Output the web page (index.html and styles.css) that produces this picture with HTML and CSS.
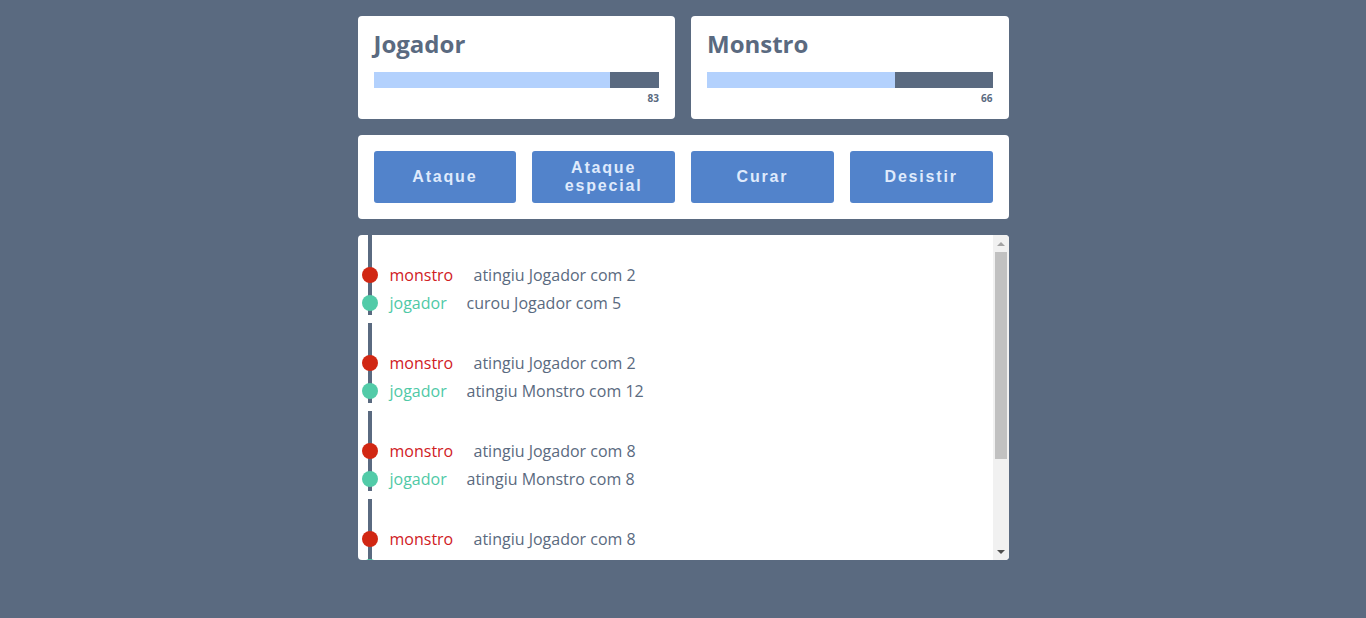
FILE: index.html
```html
<!DOCTYPE html>
<html lang="pt">
<head>
<meta charset="utf-8">
<title>Monstro</title>
<link rel="stylesheet" href="styles.css">
</head>
<body>
<main class="app">
  <section class="players">
    <div class="card player">
      <h1 class="player-name">Jogador</h1>
      <div class="life-bar"><div class="life-fill" style="width: 83%"></div></div>
      <div class="life-value">83</div>
    </div>
    <div class="card player">
      <h1 class="player-name">Monstro</h1>
      <div class="life-bar"><div class="life-fill" style="width: 66%"></div></div>
      <div class="life-value">66</div>
    </div>
  </section>
  <section class="card actions">
    <button class="btn">Ataque</button>
    <button class="btn">Ataque especial</button>
    <button class="btn">Curar</button>
    <button class="btn">Desistir</button>
  </section>
  <section class="card log">
    <div class="log-content">
      <ul class="turn">
        <li class="entry monster"><span class="who">monstro</span><span class="what">atingiu Jogador com 2</span></li>
        <li class="entry player-entry"><span class="who">jogador</span><span class="what">curou Jogador com 5</span></li>
      </ul>
      <ul class="turn">
        <li class="entry monster"><span class="who">monstro</span><span class="what">atingiu Jogador com 2</span></li>
        <li class="entry player-entry"><span class="who">jogador</span><span class="what">atingiu Monstro com 12</span></li>
      </ul>
      <ul class="turn">
        <li class="entry monster"><span class="who">monstro</span><span class="what">atingiu Jogador com 8</span></li>
        <li class="entry player-entry"><span class="who">jogador</span><span class="what">atingiu Monstro com 8</span></li>
      </ul>
      <ul class="turn">
        <li class="entry monster"><span class="who">monstro</span><span class="what">atingiu Jogador com 8</span></li>
        <li class="entry player-entry"><span class="who">jogador</span><span class="what">atingiu Monstro com 10</span></li>
      </ul>
    </div>
    <div class="scrollbar">
      <div class="sb-btn"><span class="arrow-up"></span></div>
      <div class="sb-track"><div class="sb-thumb"></div></div>
      <div class="sb-btn"><span class="arrow-down"></span></div>
    </div>
  </section>
</main>
</body>
</html>
```
FILE: styles.css
```css
* { box-sizing: border-box; }

html, body {
  margin: 0;
  padding: 0;
  background: #5a6a80;
  font-family: "Open Sans", "Liberation Sans", sans-serif;
  color: #5a6a80;
}

.app {
  width: 651px;
  margin: 16px auto 0;
  display: flex;
  flex-direction: column;
  gap: 16px;
}

.card {
  background: #fff;
  border-radius: 4px;
}

.players {
  display: grid;
  grid-template-columns: 1fr 1fr;
  gap: 16px;
}

.player {
  padding: 16px;
  height: 103px;
}

.player-name {
  margin: 0;
  font-size: 24px;
  line-height: 24px;
  font-weight: 700;
  color: #5a6a80;
}

.life-bar {
  margin-top: 16px;
  height: 16px;
  background: #5a6a80;
}

.life-fill {
  height: 100%;
  background: #b3d1fd;
}

.life-value {
  margin-top: 5px;
  text-align: right;
  font-size: 10px;
  line-height: 11px;
  font-weight: 700;
  color: #5a6a80;
}

.actions {
  padding: 16px;
  display: grid;
  grid-template-columns: repeat(4, 1fr);
  gap: 16px;
}

.btn {
  height: 52px;
  border: none;
  border-radius: 3px;
  background: #5283cb;
  color: #dfeafc;
  font-family: "Liberation Sans", Arial, sans-serif;
  font-size: 16px;
  font-weight: 700;
  letter-spacing: 1.8px;
  line-height: 18px;
  padding: 0 20px;
}

.log {
  height: 325px;
  display: flex;
  overflow: hidden;
}

.log-content {
  flex: 1;
  overflow: hidden;
  display: flex;
  flex-direction: column;
  gap: 8px;
}

.turn {
  list-style: none;
  margin: 0 0 0 10px;
  padding: 26px 0 0 0;
  height: 80px;
  flex-shrink: 0;
  border-left: 4px solid #5a6a80;
}

.entry {
  position: relative;
  height: 28px;
  line-height: 28px;
  padding-left: 18px;
  font-size: 16px;
  white-space: nowrap;
}

.entry::before {
  content: "";
  position: absolute;
  left: -10px;
  top: 6px;
  width: 16px;
  height: 16px;
  border-radius: 50%;
}

.monster::before { background: #d12713; }
.player-entry::before { background: #52cba8; }

.who { display: inline-block; }
.monster .who { color: #d0201f; width: 84px; }
.player-entry .who { color: #4fc9a6; width: 77px; }

.what { color: #5a6a80; }

.scrollbar {
  width: 16px;
  flex-shrink: 0;
  background: #f1f1f1;
  display: flex;
  flex-direction: column;
}

.sb-btn {
  height: 17px;
  display: flex;
  align-items: center;
  justify-content: center;
}

.arrow-up {
  width: 0;
  height: 0;
  border-left: 4px solid transparent;
  border-right: 4px solid transparent;
  border-bottom: 4px solid #a3a3a3;
}

.arrow-down {
  width: 0;
  height: 0;
  border-left: 4px solid transparent;
  border-right: 4px solid transparent;
  border-top: 4px solid #505050;
}

.sb-track {
  flex: 1;
  padding: 0 2px;
}

.sb-thumb {
  height: 207px;
  background: #c1c1c1;
}
```
